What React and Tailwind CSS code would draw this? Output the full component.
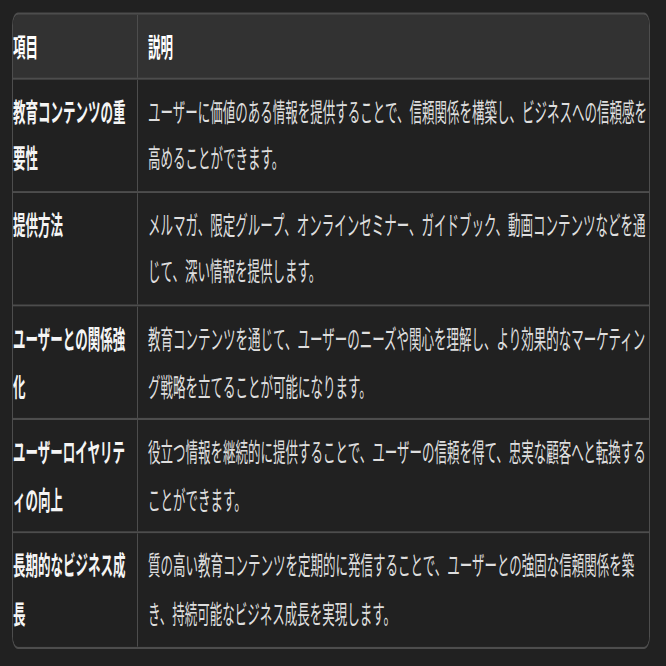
const rows = [
  {
    label: ['教育コンテンツの重', '要性'],
    text: [
      'ユーザーに価値のある情報を提供することで、信頼関係を構築し、ビジネスへの信頼感を',
      '高めることができます。',
    ],
  },
  {
    label: ['提供方法'],
    text: [
      'メルマガ、限定グループ、オンラインセミナー、ガイドブック、動画コンテンツなどを通',
      'じて、深い情報を提供します。',
    ],
  },
  {
    label: ['ユーザーとの関係強', '化'],
    text: [
      '教育コンテンツを通じて、ユーザーのニーズや関心を理解し、より効果的なマーケティン',
      'グ戦略を立てることが可能になります。',
    ],
  },
  {
    label: ['ユーザーロイヤリテ', 'ィの向上'],
    text: [
      '役立つ情報を継続的に提供することで、ユーザーの信頼を得て、忠実な顧客へと転換する',
      'ことができます。',
    ],
  },
  {
    label: ['長期的なビジネス成', '長'],
    text: [
      '質の高い教育コンテンツを定期的に発信することで、ユーザーとの強固な信頼関係を築',
      'き、持続可能なビジネス成長を実現します。',
    ],
  },
];

// the reference is stretched vertically, so the table is laid out flat and scaled on y
export default function App() {
  return (
    <div className="h-screen w-full overflow-hidden bg-[#212121] font-['Noto_Sans_CJK_JP','Noto_Sans',sans-serif]">
      <div className="origin-top scale-y-[2.1] pt-[5.71px] pl-[12px]">
        <div className="w-[638px] overflow-hidden rounded-[6px] border border-[#4d4d4d] text-[12.5px]">
          <div className="grid grid-cols-[125px_1fr] border-b border-[#4d4d4d] bg-[#323232] font-bold text-white">
            <div className="border-r border-[#4d4d4d] leading-[29.9px]">項目</div>
            <div className="pl-[10px] leading-[29.9px]">説明</div>
          </div>
          {rows.map((row, i) => (
            <div
              key={i}
              className={
                'grid grid-cols-[125px_1fr] bg-[#212121] ' +
                (i < rows.length - 1 ? 'border-b border-[#4d4d4d]' : '')
              }
            >
              <div className="border-r border-[#4d4d4d] py-[4px] font-bold text-[#f5f5f5]">
                {row.label.map((l, j) => (
                  <div key={j} className="whitespace-nowrap leading-[22.6px]">
                    {l}
                  </div>
                ))}
              </div>
              <div className="py-[4px] pl-[10px] text-[#dedede]">
                {row.text.map((t, j) => (
                  <div key={j} className="whitespace-nowrap leading-[22.6px]">
                    {t}
                  </div>
                ))}
              </div>
            </div>
          ))}
        </div>
      </div>
    </div>
  );
}
